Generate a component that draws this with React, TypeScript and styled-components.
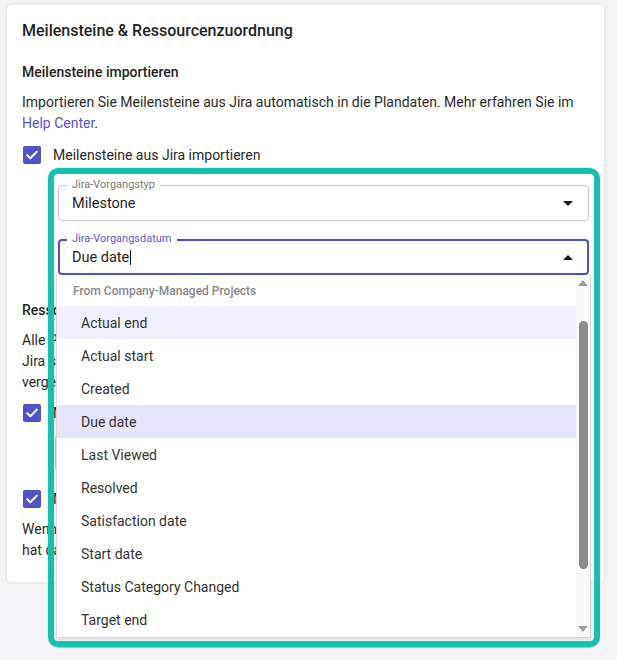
import React from 'react'
import styled, { createGlobalStyle, css } from 'styled-components'

const GlobalStyle = createGlobalStyle`
    html, body, #root {
        min-height: 100%;
    }
    body {
        margin: 0;
        background: #f3f3f5;
        font-family: Roboto, 'Liberation Sans', sans-serif;
        color: #222;
    }
`

const dateOptions = [
    'Actual end',
    'Actual start',
    'Created',
    'Due date',
    'Last Viewed',
    'Resolved',
    'Satisfaction date',
    'Start date',
    'Status Category Changed',
    'Target end',
]

const Checkbox = () => (
    <Box>
        <svg width="12" height="10" viewBox="0 0 12 10">
            <polyline points="1.2,5.2 4.4,8.2 10.8,1.6" fill="none" stroke="#fff" strokeWidth="2" strokeLinecap="round" strokeLinejoin="round" />
        </svg>
    </Box>
)

export default function App() {
    return (
        <Page>
            <GlobalStyle />
            <Card>
                <Title>Meilensteine &amp; Ressourcenzuordnung</Title>
                <SubTitle $gap={19}>Meilensteine importieren</SubTitle>
                <Text $gap={10} $wrap>
                    Importieren Sie Meilensteine aus Jira automatisch in die Plandaten. Mehr erfahren Sie im{' '}
                    <Link href="#">Help Center</Link>.
                </Text>
                <CheckRow $gap={9}>
                    <Checkbox />
                    Meilensteine aus Jira importieren
                </CheckRow>

                <FieldStack>
                    <SelectField>
                        <FieldLabel>Jira-Vorgangstyp</FieldLabel>
                        <FieldValue>Milestone</FieldValue>
                        <Caret />
                    </SelectField>
                    <SelectField $focused>
                        <FieldLabel $focused>Jira-Vorgangsdatum</FieldLabel>
                        <FieldValue>
                            Due date<Cursor />
                        </FieldValue>
                        <Caret $up />
                        <Menu>
                            <Options>
                                <MenuHeader>From Company-Managed Projects</MenuHeader>
                                {dateOptions.map((option, i) => (
                                    <MenuItem key={option} $hover={i === 0} $selected={option === 'Due date'}>
                                        {option}
                                    </MenuItem>
                                ))}
                            </Options>
                            <ScrollBar>
                                <ScrollArrow />
                                <ScrollThumb />
                                <ScrollArrow $down />
                            </ScrollBar>
                        </Menu>
                    </SelectField>
                </FieldStack>

                <SubTitle $gap={25}>Ressourcenzuordnung</SubTitle>
                <Text $gap={10}>
                    Alle Personen, denen in Jira Vorgänge zugewiesen sind, werden als Ressourcen
                    <br />
                    Jira synchronisiert. Bestehende Ressourcen werden über ihre E-Mail-Adresse
                    <br />
                    vergeben und automatisch zugeordnet.
                </Text>
                <CheckRow $gap={8}>
                    <Checkbox />
                    Mitarbeitende automatisch zuordnen
                </CheckRow>
                <PlainInput />
                <CheckRow $gap={15}>
                    <Checkbox />
                    Manuelle Zuordnungen beibehalten
                </CheckRow>
                <Text $gap={8}>
                    Wenn diese Option aktiviert ist, bleiben manuelle Zuordnungen erhalten.
                    <br />
                    hat dann Vorrang vor der Zuordnung aus Jira.
                </Text>

                <HighlightFrame />
            </Card>
        </Page>
    )
}

const Page = styled.div`
    min-height: 660px;
    padding-top: 3px;
    box-sizing: border-box;
`

const Card = styled.section`
    position: relative;
    box-sizing: border-box;
    width: 601px;
    margin-left: 5px;
    padding: 14px 15px 21px 15px;
    background: #ffffff;
    border: 2px solid #ebebed;
    border-radius: 7px;
`

const Title = styled.h2`
    margin: 0;
    font-size: 16px;
    line-height: 24px;
    font-weight: 500;
    color: #1f1f1f;
`

const SubTitle = styled.h3<{ $gap: number }>`
    margin: ${({ $gap }) => $gap}px 0 0;
    font-size: 14px;
    line-height: 20px;
    font-weight: 500;
    color: #1f1f1f;
`

const Text = styled.p<{ $gap: number; $wrap?: boolean }>`
    margin: ${({ $gap }) => $gap}px 0 0;
    font-size: 14px;
    line-height: 21px;
    color: #2a2a2a;
    white-space: ${({ $wrap }) => ($wrap ? 'normal' : 'nowrap')};
`

const Link = styled.a`
    color: #5552d3;
    text-decoration: none;
`

const CheckRow = styled.label<{ $gap: number }>`
    display: flex;
    align-items: center;
    gap: 12px;
    height: 24px;
    margin-top: ${({ $gap }) => $gap}px;
    padding-left: 1px;
    font-size: 14px;
    color: #2a2a2a;
`

const Box = styled.span`
    display: flex;
    align-items: center;
    justify-content: center;
    width: 18px;
    height: 18px;
    border-radius: 2px;
    background: #5053c7;
`

const FieldStack = styled.div`
    display: flex;
    flex-direction: column;
    gap: 18px;
    margin: 18px 0 0 36px;
`

const SelectField = styled.div<{ $focused?: boolean }>`
    position: relative;
    box-sizing: border-box;
    display: flex;
    align-items: center;
    justify-content: space-between;
    height: 36px;
    padding: 0 15px 0 13px;
    border: 1px solid #c6c6c6;
    border-radius: 4px;
    background: #ffffff;
    ${({ $focused }) =>
        $focused &&
        css`
            padding: 0 14px 0 12px;
            border: 2px solid #4d50c6;
        `}
`

const FieldLabel = styled.span<{ $focused?: boolean }>`
    position: absolute;
    top: ${({ $focused }) => ($focused ? -9 : -8)}px;
    left: ${({ $focused }) => ($focused ? 7 : 8)}px;
    padding: 0 5px;
    background: #ffffff;
    font-size: 11px;
    line-height: 13px;
    color: ${({ $focused }) => ($focused ? '#5b5bd2' : '#7a7a7a')};
`

const FieldValue = styled.span`
    display: flex;
    align-items: center;
    font-size: 14.5px;
    color: #1f1f1f;
`

const Cursor = styled.span`
    display: inline-block;
    width: 1px;
    height: 15px;
    margin-left: 1px;
    background: #111;
`

const Caret = styled.span<{ $up?: boolean }>`
    width: 0;
    height: 0;
    border-left: 5px solid transparent;
    border-right: 5px solid transparent;
    ${({ $up }) => ($up ? 'border-bottom: 5px solid #1a1a1a;' : 'border-top: 5px solid #1a1a1a;')}
`

const Menu = styled.div`
    position: absolute;
    z-index: 2;
    top: calc(100% + 2px);
    left: -4px;
    box-sizing: border-box;
    display: flex;
    width: 535px;
    height: 363px;
    background: #ffffff;
    border: 1px solid #d8d8d8;
    border-top: none;
    box-shadow: 0 2px 4px rgba(0, 0, 0, 0.08);
`

const Options = styled.div`
    flex: 1;
    display: flex;
    flex-direction: column;
    overflow: hidden;
`

const MenuHeader = styled.div`
    flex: 0 0 31px;
    display: flex;
    align-items: center;
    padding-left: 16px;
    font-size: 12px;
    font-weight: 500;
    color: #88868a;
`

const MenuItem = styled.div<{ $hover?: boolean; $selected?: boolean }>`
    flex: 0 0 33px;
    display: flex;
    align-items: center;
    padding-left: 24px;
    font-size: 14px;
    color: #333;
    background: ${({ $hover, $selected }) => ($selected ? '#e5e5fa' : $hover ? '#f1f1fd' : 'transparent')};
`

const ScrollBar = styled.div`
    flex: 0 0 14px;
    display: flex;
    flex-direction: column;
    align-items: center;
    padding: 5px 0 5px;
    box-sizing: border-box;
    background: #f8f8f8;
`

const ScrollArrow = styled.span<{ $down?: boolean }>`
    width: 0;
    height: 0;
    border-left: 5px solid transparent;
    border-right: 5px solid transparent;
    ${({ $down }) =>
        $down
            ? 'border-top: 6px solid #a0a0a0; margin-top: auto;'
            : 'border-bottom: 6px solid #a0a0a0;'}
`

const ScrollThumb = styled.span`
    width: 9px;
    height: 248px;
    margin-top: 35px;
    border-radius: 5px;
    background: #8c8c8c;
`

const PlainInput = styled.div`
    box-sizing: border-box;
    height: 38px;
    margin: 9px 0 0 33px;
    border: 1px solid #c6c6c6;
    border-radius: 4px;
`

const HighlightFrame = styled.div`
    position: absolute;
    z-index: 3;
    left: 41px;
    top: 163px;
    box-sizing: border-box;
    width: 552px;
    height: 479px;
    border: 6px solid #12c1ae;
    border-radius: 10px;
    pointer-events: none;
    box-shadow: 0 1px 1px rgba(0, 0, 0, 0.25);
`
